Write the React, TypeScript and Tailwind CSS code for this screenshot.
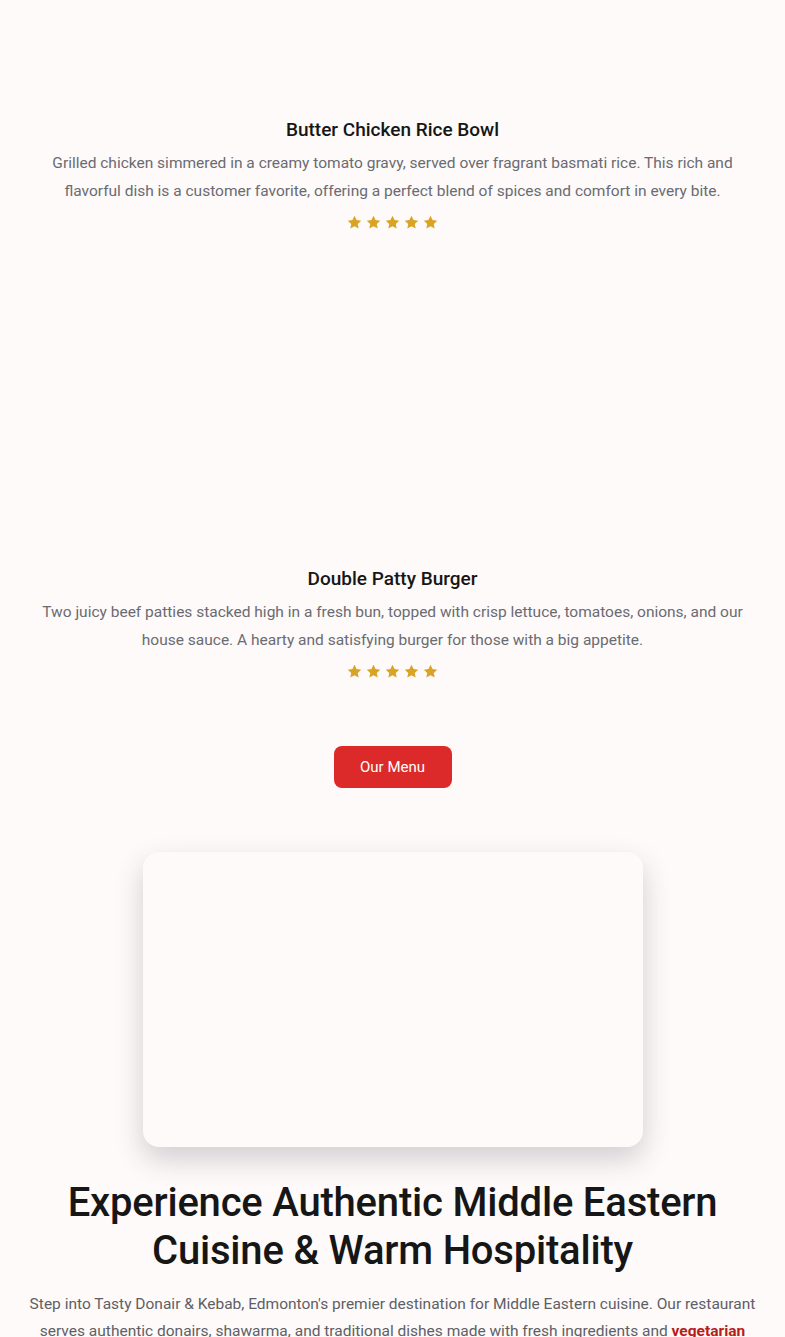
import React from 'react';

const font = { fontFamily: 'Roboto, "Liberation Sans", sans-serif' };

function Stars() {
    return (
        <div className="flex justify-center gap-[2px] mt-[9px]">
            {[0, 1, 2, 3, 4].map((i) => (
                <svg key={i} viewBox="0 0 24 24" className="w-[17px] h-[17px] fill-[#d9a326]">
                    <path d="M12 2.5l2.9 6.1 6.6.8-4.9 4.6 1.3 6.6L12 17.3l-5.9 3.3 1.3-6.6-4.9-4.6 6.6-.8z" />
                </svg>
            ))}
        </div>
    );
}

function Dish({ title, text }: { title: string; text: string }) {
    return (
        <div className="flex flex-col items-center text-center px-10">
            <h3 className="text-[19px] leading-[28px] font-medium text-[#161616]">{title}</h3>
            <p className="mt-[5px] text-[15.5px] leading-[28px] text-[#6b6b72] max-w-[710px]">{text}</p>
            <Stars />
        </div>
    );
}

export default function App() {
    return (
        <div className="min-h-screen bg-[#fdfaf9] overflow-hidden" style={font}>
            <div className="h-[116px]" />
            <Dish
                title="Butter Chicken Rice Bowl"
                text="Grilled chicken simmered in a creamy tomato gravy, served over fragrant basmati rice. This rich and flavorful dish is a customer favorite, offering a perfect blend of spices and comfort in every bite."
            />
            <div className="h-[334px]" />
            <Dish
                title="Double Patty Burger"
                text="Two juicy beef patties stacked high in a fresh bun, topped with crisp lettuce, tomatoes, onions, and our house sauce. A hearty and satisfying burger for those with a big appetite."
            />
            <div className="flex justify-center mt-[66px]">
                <button className="w-[118px] h-[42px] rounded-lg bg-[#dc2a2a] text-white text-[15px]">Our Menu</button>
            </div>
            <div className="flex justify-center mt-[64px]">
                <div className="w-[500px] h-[295px] rounded-2xl bg-[#fdfaf9] shadow-[0_12px_28px_rgba(60,50,70,0.22)]" />
            </div>
            <div className="flex flex-col items-center text-center px-6 mt-[32px]">
                <h2 className="text-[40px] leading-[48px] font-medium text-[#161616] tracking-[-0.2px]">
                    Experience Authentic Middle Eastern<br />Cuisine &amp; Warm Hospitality
                </h2>
                <p className="mt-[16px] text-[15.5px] leading-[27px] text-[#5f5f66] max-w-[740px]">
                    Step into Tasty Donair &amp; Kebab, Edmonton's premier destination for Middle Eastern cuisine. Our restaurant serves authentic donairs, shawarma, and traditional dishes made with fresh ingredients and{' '}
                    <span className="font-bold text-[#b91c1c]">vegetarian options</span> for every guest.
                </p>
            </div>
        </div>
    );
}
